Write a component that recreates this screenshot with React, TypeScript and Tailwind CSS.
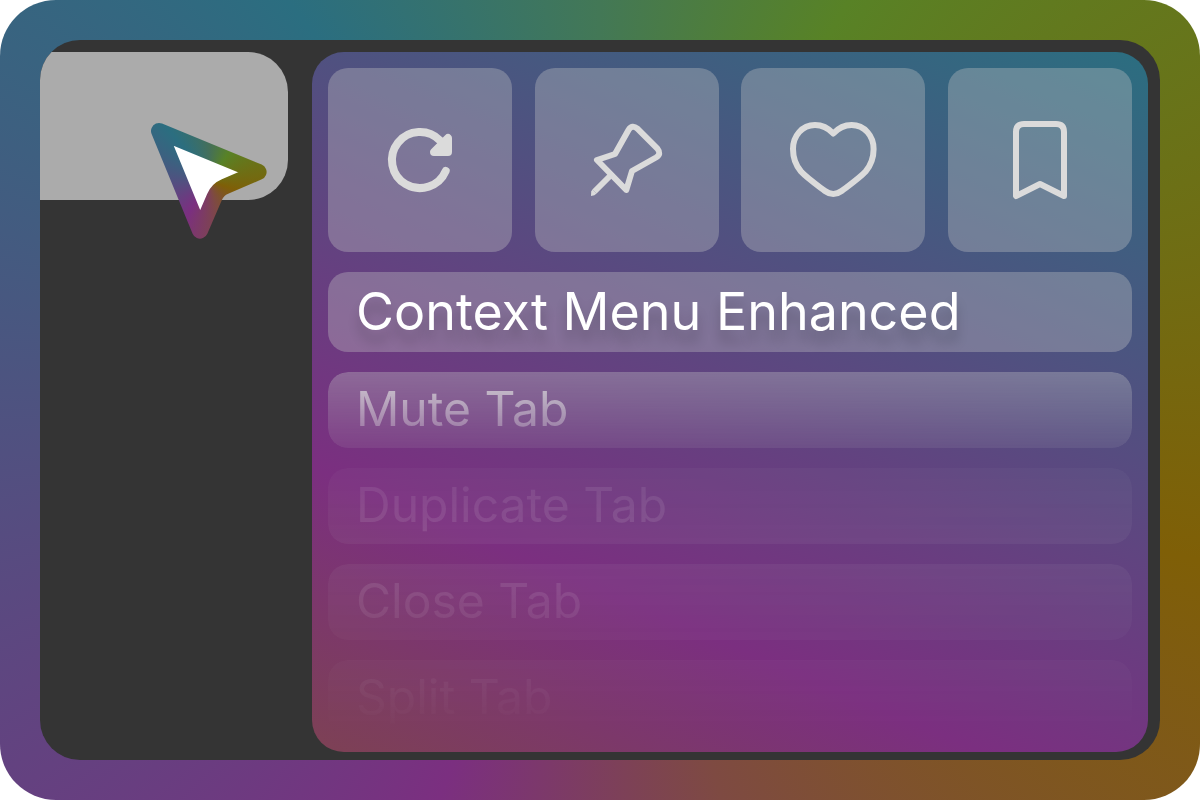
import type { ReactNode } from "react";

const actions: { label: string; icon: ReactNode }[] = [
  {
    label: "Reload",
    icon: (
      <>
        <path d="M445.7 171A28 28 0 1 1 440 140.5" strokeWidth="8" />
        <path d="M448 138V152H434Z" fill="currentColor" strokeWidth="8" />
      </>
    ),
  },
  {
    label: "Pin",
    icon: (
      <g transform="translate(-207 0)">
        <path
          d="M597 160L615 154L628.5 130Q632 124.2 637.4 128.6L657.4 148.6Q661.8 154 656 157.5L632 171L626.3 190Z"
          strokeWidth="6"
        />
        <path d="M611 175L594.5 191.5" strokeWidth="6" strokeLinecap="butt" />
        <path d="M592.4 189.4L596.6 193.6L594.4 195.3L591 196L591.2 191.5Z" fill="currentColor" strokeWidth="0" />
      </g>
    ),
  },
  {
    label: "Favorite",
    icon: (
      <path
        transform="translate(-413 0)"
        d="M833.3 133.5C828 127.8 822 125 815 125C802 125 793 136 793 149C793 158 795.5 165 801 171.5C806.5 177.5 815 183.5 825 191Q833.3 197 841.6 191C851.6 183.5 860.1 177.5 865.6 171.5C871.1 165 873.6 158 873.6 149C873.6 136 864.6 125 851.6 125C844.6 125 838.6 127.8 833.3 133.5Z"
        strokeWidth="6"
      />
    ),
  },
  {
    label: "Bookmark",
    icon: (
      <path
        transform="translate(-620 0)"
        d="M1016 196V132Q1016 124 1024 124H1056Q1064 124 1064 132V196L1040 184Z"
        strokeWidth="6"
      />
    ),
  },
];

const items = [
  { label: "Mute Tab", fade: "mask-[linear-gradient(to_bottom,#000,rgba(0,0,0,0.3))]" },
  { label: "Duplicate Tab", fade: "mask-[linear-gradient(to_bottom,rgba(0,0,0,0.13),rgba(0,0,0,0.2))]" },
  { label: "Close Tab", fade: "mask-[linear-gradient(to_bottom,rgba(0,0,0,0.2),rgba(0,0,0,0.11))]" },
  { label: "Split Tab", fade: "mask-[linear-gradient(to_bottom,rgba(0,0,0,0.11),transparent)]" },
];

const cursorPath = "M159 131L258.6 172L225 186.5Q217.6 189.6 214.5 197L200 230.6Z";

function Cursor() {
  return (
    <svg
      aria-hidden="true"
      viewBox="150 122 118 118"
      className="absolute top-[70px] left-[110px] z-10 size-[118px]"
    >
      <defs>
        <mask id="cursor-edge" maskUnits="userSpaceOnUse" x="150" y="122" width="118" height="118">
          <path d={cursorPath} fill="none" stroke="white" strokeWidth="16" strokeLinejoin="round" />
        </mask>
      </defs>
      <path d={cursorPath} fill="white" />
      <g mask="url(#cursor-edge)">
        <foreignObject x="150" y="122" width="118" height="118">
          <div className="size-full bg-[conic-gradient(from_0deg,#446f5a_0deg,#588226_35deg,#7f5f07_108deg,#7e4a42_163deg,#7b2f80_212deg,#2b6e80_322deg,#446f5a_360deg)]" />
        </foreignObject>
      </g>
    </svg>
  );
}

export default function App() {
  return (
    <div className="min-h-screen bg-white font-['Inter',sans-serif]">
      <div className="flex min-h-screen rounded-[56px] bg-[conic-gradient(from_0deg,#437856_0deg,#588226_32deg,#7f5f07_105deg,#7e4a42_163deg,#7b2f80_202deg,#2b6e80_322deg,#437856_360deg)] p-10">
        <main className="flex flex-1 gap-6 overflow-hidden rounded-[40px] bg-[#343434] pt-3 pr-3 pb-2">
          <div className="relative w-62 shrink-0">
            <div className="h-37 rounded-r-[40px] bg-[#ababab]" />
            <Cursor />
          </div>
          <section className="flex min-w-0 flex-1 flex-col gap-5 rounded-[32px] bg-[linear-gradient(203deg,#2b6e80_0%,#7b2f80_73%,#7d4154_100%)] p-4">
            <div className="flex justify-between">
              {actions.map((action) => (
                <button
                  key={action.label}
                  type="button"
                  aria-label={action.label}
                  className="size-46 rounded-[20px] bg-[#c7c7c7]/35 text-[#dbdbdb]"
                >
                  <svg
                    viewBox="328 68 184 184"
                    fill="none"
                    stroke="currentColor"
                    strokeLinecap="round"
                    strokeLinejoin="round"
                    className="size-full"
                  >
                    {action.icon}
                  </svg>
                </button>
              ))}
            </div>
            <button
              type="button"
              className="h-20 rounded-[20px] bg-[#c7c7c7]/35 px-7 text-left text-[52px] leading-[80px] whitespace-nowrap text-white text-shadow-[0_12px_12px_rgba(0,0,0,0.2)]"
            >
              Context Menu Enhanced
            </button>
            {items.map((item) => (
              <button
                key={item.label}
                type="button"
                className={`h-19 rounded-[20px] bg-[#c7c7c7]/35 px-7 pb-0.5 text-left text-[48px] leading-[74px] whitespace-nowrap text-[#dbdbdb]/90 ${item.fade}`}
              >
                {item.label}
              </button>
            ))}
          </section>
        </main>
      </div>
    </div>
  );
}
